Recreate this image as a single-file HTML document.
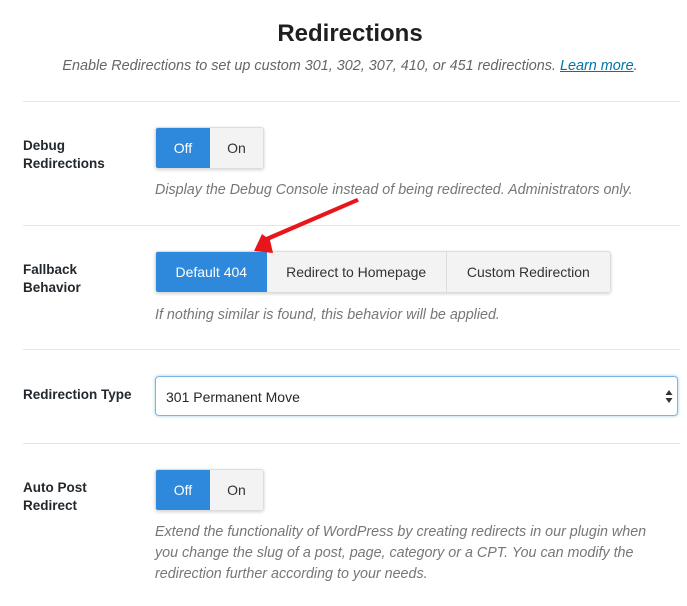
<!DOCTYPE html>
<html><head><meta charset="utf-8">
<style>
*{box-sizing:border-box;margin:0;padding:0}
body{width:687px;height:606px;background:#fff;font-family:"Liberation Sans",sans-serif;color:#23282d;position:relative;overflow:hidden}
.a{position:absolute;white-space:nowrap}
h1{position:absolute;left:0;width:700px;text-align:center;top:20px;font-size:24px;font-weight:bold;color:#1d1f21}
.sub{left:0;width:700px;text-align:center;top:58px;font-size:14.4px;font-style:italic;color:#666}
.sub a{color:#0073aa;text-decoration:underline}
.hr{position:absolute;left:23px;right:7px;height:1px;background:#e5e5e5}
.lbl{font-size:13.5px;font-weight:bold;line-height:18px;color:#23282d}
.desc{font-size:14.3px;font-style:italic;color:#777;line-height:21px}
.grp{position:absolute;display:flex;height:42px;border-radius:3px;box-shadow:0 1px 3px rgba(0,0,0,.18);overflow:hidden;border:1px solid #ddd}
.grp div{display:flex;align-items:center;justify-content:center;font-size:14px;background:#f3f3f3;color:#333;border-right:1px solid #ddd}
.grp div:last-child{border-right:none}
.grp .on{background:#2e88dc;color:#fff;border-right:none}
.sel{position:absolute;left:155px;top:376px;width:523px;height:40px;border:1px solid #7fb3e3;border-radius:4px;box-shadow:0 0 2px 1px rgba(30,140,190,.25);font-size:14px;padding:12px 0 0 10px;color:#23282d}
</style></head><body>
<h1>Redirections</h1>
<div class="a sub">Enable Redirections to set up custom 301, 302, 307, 410, or 451 redirections. <a>Learn more</a>.</div>
<div class="hr" style="top:101px"></div>
<div class="a lbl" style="left:23px;top:137px">Debug<br>Redirections</div>
<div class="grp" style="left:155px;top:127px;width:109px"><div class="on" style="width:55px">Off</div><div style="width:54px">On</div></div>
<div class="a desc" style="left:155px;top:180px">Display the Debug Console instead of being redirected. Administrators only.</div>
<div class="hr" style="top:225px"></div>
<div class="a lbl" style="left:23px;top:261px">Fallback<br>Behavior</div>
<div class="grp" style="left:155px;top:251px;width:456px"><div class="on" style="width:111px">Default 404</div><div style="width:181px">Redirect to Homepage</div><div style="width:164px">Custom Redirection</div></div>
<div class="a desc" style="left:155px;top:305px">If nothing similar is found, this behavior will be applied.</div>
<div class="hr" style="top:349px"></div>
<div class="a lbl" style="left:23px;top:386px">Redirection Type</div>
<div class="sel">301 Permanent Move
<svg style="position:absolute;right:4px;top:13px" width="8" height="13" viewBox="0 0 8 13"><path d="M4 0L7.5 5H.5z M4 13L7.5 8H.5z" fill="#333"/></svg></div>
<div class="hr" style="top:443px"></div>
<div class="a lbl" style="left:23px;top:479px">Auto Post<br>Redirect</div>
<div class="grp" style="left:155px;top:469px;width:109px"><div class="on" style="width:55px">Off</div><div style="width:54px">On</div></div>
<div class="a desc" style="left:155px;top:522px">Extend the functionality of WordPress by creating redirects in our plugin when<br>you change the slug of a post, page, category or a CPT. You can modify the<br>redirection further according to your needs.</div>
<svg style="position:absolute;left:0;top:0" width="687" height="606"><path d="M357 198 L359 201.5 L270 240 L273 253 L254 251 L262 234 L266 237 Z" fill="#e8161b"/></svg>
</body></html>
